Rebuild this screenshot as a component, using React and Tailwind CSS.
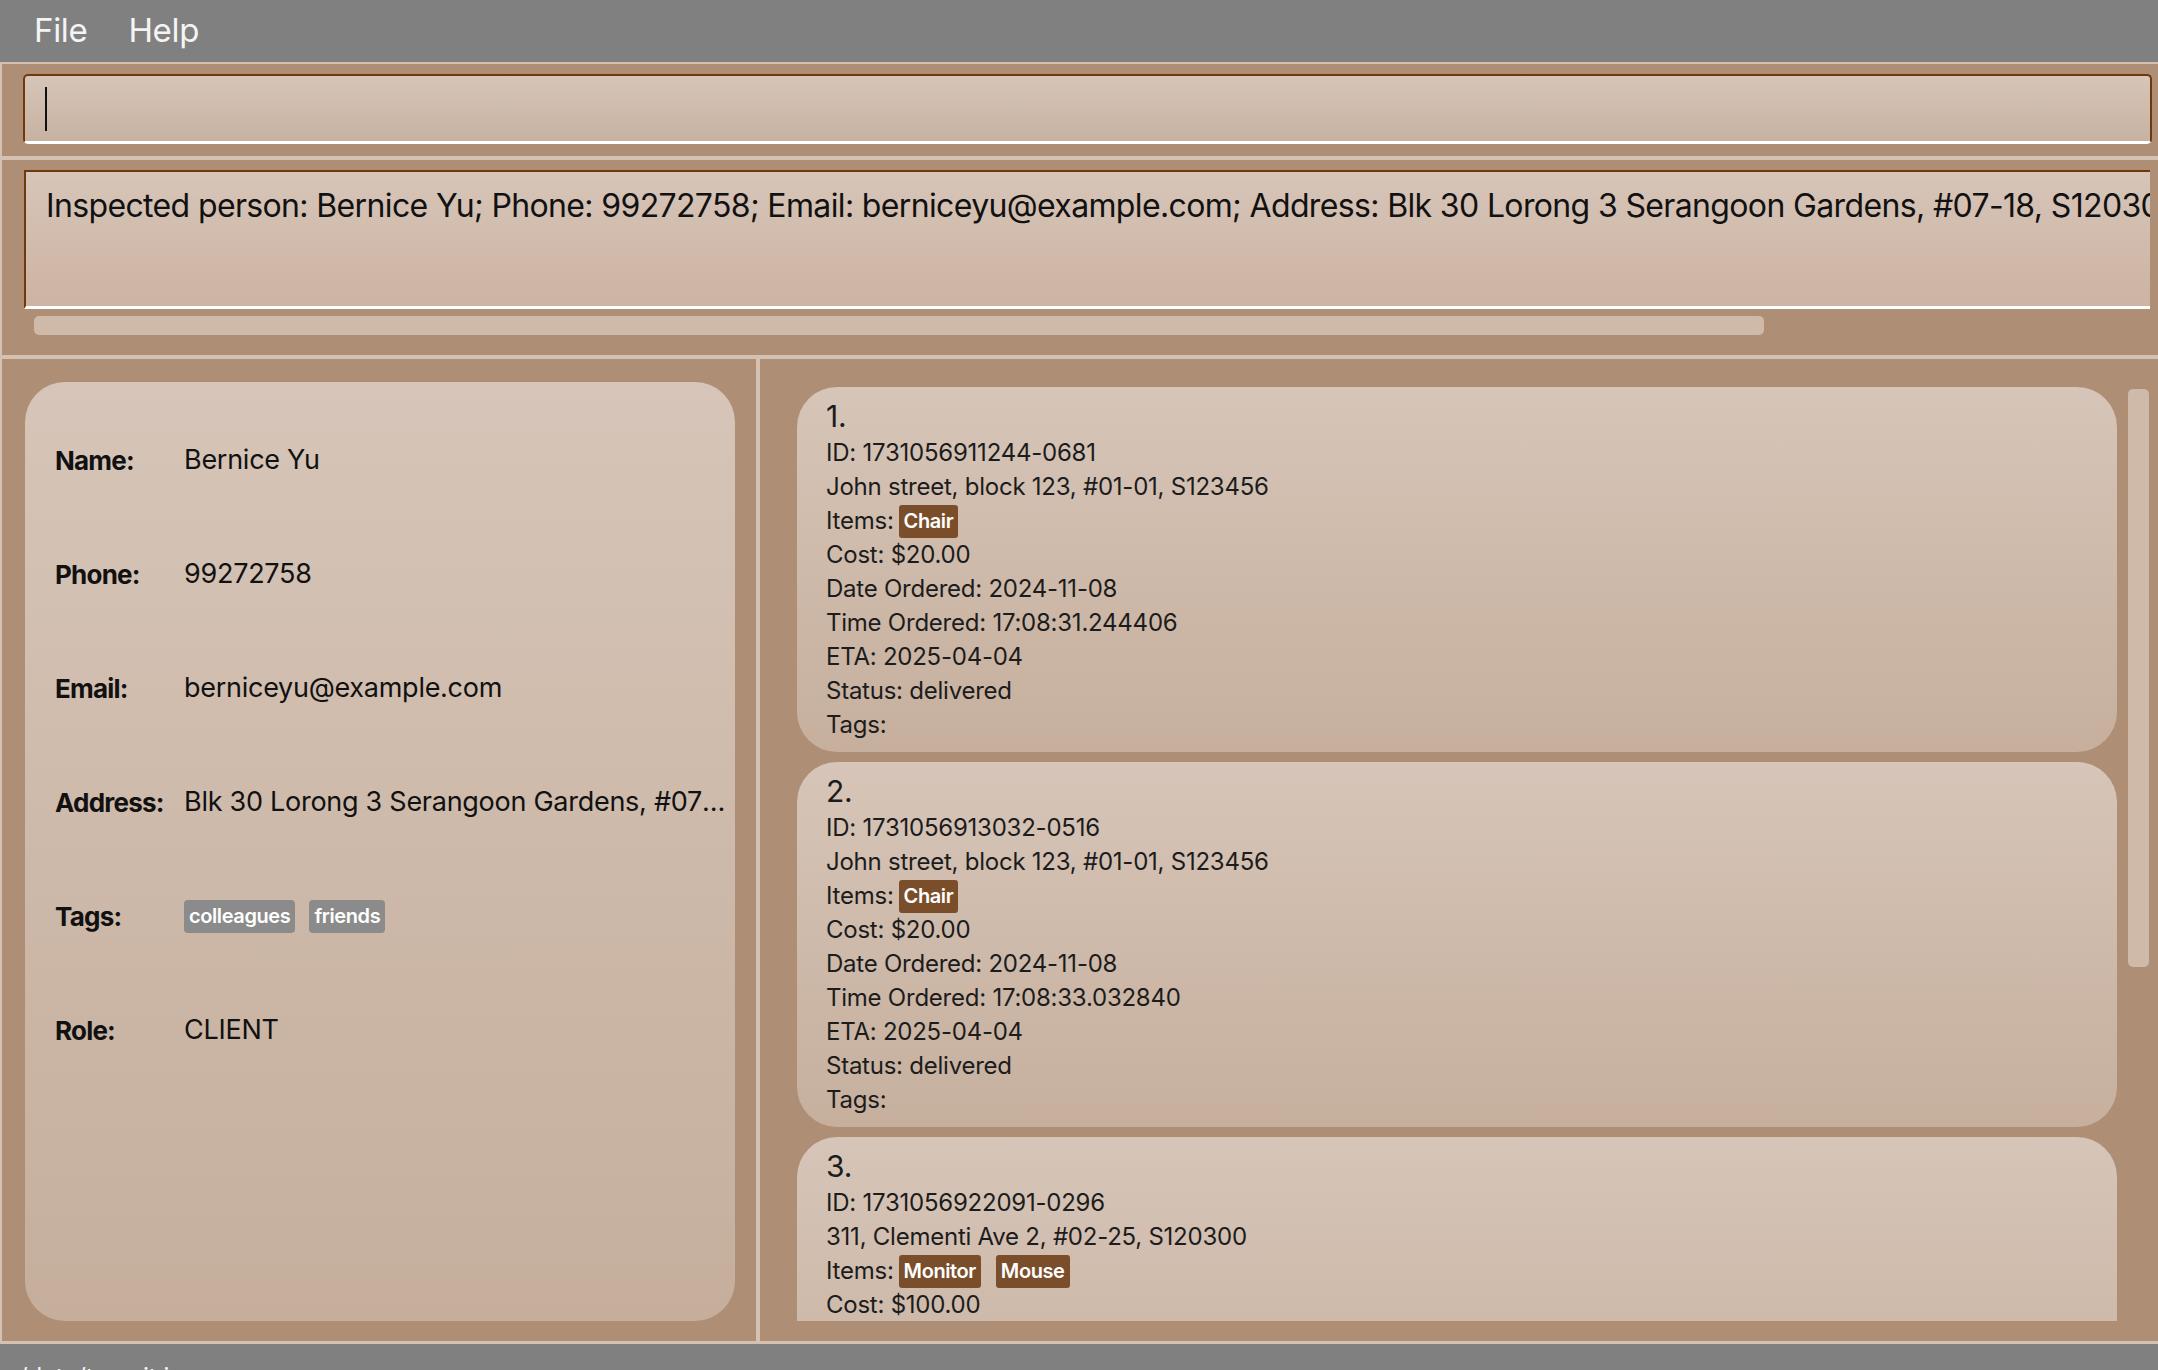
import React from "react";

const person = [
  { label: "Name:", value: "Bernice Yu" },
  { label: "Phone:", value: "99272758" },
  { label: "Email:", value: "berniceyu@example.com" },
  { label: "Address:", value: "Blk 30 Lorong 3 Serangoon Gardens, #07-18, S120300" },
  { label: "Tags:", tags: ["colleagues", "friends"] },
  { label: "Role:", value: "CLIENT" },
];

const orders = [
  {
    id: "1731056911244-0681",
    address: "John street, block 123, #01-01, S123456",
    items: ["Chair"],
    cost: "$20.00",
    date: "2024-11-08",
    time: "17:08:31.244406",
    eta: "2025-04-04",
    status: "delivered",
  },
  {
    id: "1731056913032-0516",
    address: "John street, block 123, #01-01, S123456",
    items: ["Chair"],
    cost: "$20.00",
    date: "2024-11-08",
    time: "17:08:33.032840",
    eta: "2025-04-04",
    status: "delivered",
  },
  {
    id: "1731056922091-0296",
    address: "311, Clementi Ave 2, #02-25, S120300",
    items: ["Monitor", "Mouse"],
    cost: "$100.00",
    date: "2024-11-08",
    time: "17:08:42.091120",
    eta: "2025-04-04",
    status: "delivered",
  },
];

function OrderCard({ order, index }) {
  return (
    <div className="shrink-0 rounded-[40px] bg-gradient-to-b from-[#d6c5b8] to-[#c6af9d] pl-[29px] pt-[9px] pb-[10px] text-[24px] leading-[34px] text-[#1c1c1c] tracking-[-0.01em]">
      <div className="text-[30px] leading-[40px]">{index}.</div>
      <div>ID: {order.id}</div>
      <div>{order.address}</div>
      <div className="flex items-center">
        <span>Items:</span>
        <div className="flex gap-[15px] ml-[5px]">
          {order.items.map((it) => (
            <span key={it} className="bg-[#7a4e2a] text-white font-semibold text-[20px] leading-[33px] h-[33px] px-[5px] rounded-[3px] tracking-[-0.02em]">
              {it}
            </span>
          ))}
        </div>
      </div>
      <div>Cost: {order.cost}</div>
      <div>Date Ordered: {order.date}</div>
      <div>Time Ordered: {order.time}</div>
      <div>ETA: {order.eta}</div>
      <div>Status: {order.status}</div>
      <div>Tags:</div>
    </div>
  );
}

export default function App() {
  return (
    <div className="w-[2158px] h-[1370px] flex flex-col bg-[#ae8e75] overflow-hidden font-['Inter',sans-serif]">
      {/* menu bar */}
      <div className="h-[62px] shrink-0 bg-[#808080] flex items-center pl-[34px] gap-[41px] text-[33px] text-[#f4f4f4] tracking-[-0.01em]">
        <span>File</span>
        <span>Help</span>
      </div>
      <div className="h-[2px] shrink-0 bg-[#d4c1b2]" />

      {/* command box */}
      <div className="h-[92px] shrink-0 border-l-2 border-[#d4c1b2] pt-[10px] pl-[21px] pr-[6px]">
        <div className="h-[70px] rounded-[5px] border-2 border-b-[3px] border-[#6e3a0c] border-b-white bg-gradient-to-b from-[#d6c5b8] to-[#c7b2a2] flex items-center pl-[20px]">
          <div className="w-[2px] h-[44px] bg-[#111]" />
        </div>
      </div>
      <div className="h-[4px] shrink-0 bg-[#d4c1b2]" />

      {/* result box */}
      <div className="h-[195px] shrink-0 border-l-2 border-[#d4c1b2] pt-[10px] pl-[22px] pr-[8px] flex flex-col">
        <div className="h-[139px] border-t-2 border-l-2 border-b-[3px] border-[#6e3a0c] border-b-white bg-gradient-to-b from-[#d6c5b8] to-[#cdb3a2] overflow-hidden pl-[20px] pt-[14px]">
          <div className="whitespace-nowrap text-[32px] leading-[40px] text-[#111] tracking-[-0.02em]">
            Inspected person: Bernice Yu; Phone: 99272758; Email: berniceyu@example.com; Address: Blk 30 Lorong 3 Serangoon Gardens, #07-18, S120300; Tags: [colleagues][friends]; Role: CLIENT
          </div>
        </div>
        <div className="mt-[7px] ml-[10px] w-[1730px] h-[19px] rounded-[5px] bg-[#cfbaa9]" />
      </div>
      <div className="h-[4px] shrink-0 bg-[#d4c1b2]" />

      {/* main panes */}
      <div className="flex-1 min-h-0 flex">
        {/* left pane */}
        <div className="w-[756px] shrink-0 border-l-2 border-[#d4c1b2] pt-[23px] pb-[20px] pl-[23px] pr-[21px] flex">
          <div className="flex-1 rounded-[40px] bg-gradient-to-b from-[#d6c5b8] to-[#c5ae9c] pt-[21px] pl-[30px] pr-[6px] overflow-hidden">
            {person.map((row) => (
              <div key={row.label} className="h-[114px] flex items-center text-[#111]">
                <div className="w-[129px] shrink-0 font-bold text-[26px] tracking-[-0.03em]">{row.label}</div>
                {row.tags ? (
                  <div className="flex gap-[14px]">
                    {row.tags.map((t) => (
                      <span key={t} className="bg-[#8b8b8b] text-white font-semibold text-[20px] leading-[33px] h-[33px] px-[5px] rounded-[4px] tracking-[-0.02em]">
                        {t}
                      </span>
                    ))}
                  </div>
                ) : (
                  <div className="min-w-0 truncate text-[27px] tracking-[-0.01em]">{row.value}</div>
                )}
              </div>
            ))}
          </div>
        </div>
        <div className="w-[4px] shrink-0 bg-[#d4c1b2]" />

        {/* right pane */}
        <div className="flex-1 min-w-0 flex pt-[28px] pb-[20px] pl-[37px]">
          <div className="w-[1320px] shrink-0 flex flex-col gap-[10px] overflow-hidden">
            {orders.map((o, i) => (
              <OrderCard key={o.id} order={o} index={i + 1} />
            ))}
          </div>
          <div className="ml-[11px] mt-[2px] w-[21px] h-[578px] rounded-[5px] bg-[#cfbaa9]" />
        </div>
      </div>
      <div className="h-[3px] shrink-0 bg-[#d4c1b2]" />

      {/* status bar */}
      <div className="h-[26px] shrink-0 bg-[#808080] overflow-hidden pl-[12px] pt-[18px] text-[24px] leading-[30px] text-[#f4f4f4]">
        ./data/transit.json
      </div>
    </div>
  );
}
